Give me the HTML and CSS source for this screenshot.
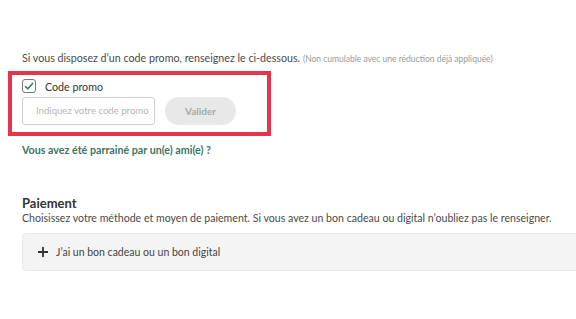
FILE: index.html
```html
<!DOCTYPE html>
<html lang="fr">
<head>
<meta charset="utf-8">
<link rel="stylesheet" href="styles.css">
</head>
<body>
<main class="page">
  <p class="intro">Si vous disposez d’un code promo, renseignez le ci-dessous. <span class="note">(Non cumulable avec une réduction déjà appliquée)</span></p>
  <div class="promo">
    <label class="check-row">
      <span class="checkbox">
        <svg width="10" height="8" viewBox="0 0 10 8"><path d="M1 4.2 L3.8 6.8 L9 1" fill="none" stroke="#2e6b58" stroke-width="1.4"/></svg>
      </span>
      <span class="check-label">Code promo</span>
    </label>
    <div class="field-row">
      <div class="input">Indiquez votre code promo</div>
      <button class="btn">Valider</button>
    </div>
  </div>
  <a class="referral">Vous avez été parrainé par un(e) ami(e) ?</a>
  <h2 class="title">Paiement</h2>
  <p class="desc">Choisissez votre méthode et moyen de paiement. Si vous avez un bon cadeau ou digital n’oubliez pas le renseigner.</p>
  <div class="gift">
    <svg class="plus" width="10" height="10" viewBox="0 0 10 10"><path d="M5 0 V10 M0 5 H10" stroke="#333" stroke-width="1.8"/></svg>
    <span>J’ai un bon cadeau ou un bon digital</span>
  </div>
</main>
</body>
</html>
```
FILE: styles.css
```css
html, body { margin: 0; padding: 0; background: #fff; }
body { font-family: Lato, "Liberation Sans", sans-serif; color: #444; }
.page { padding: 51px 0 0 22px; }
.intro { margin: 0; font-size: 10.7px; line-height: 14px; color: #4a4a4a; white-space: nowrap; }
.note { font-size: 8.5px; color: #9a9a9a; }
.promo {
  width: 263px; box-sizing: border-box; margin: 5px 0 0 -14px;
  border: 4px solid #e8334d; padding: 4px 10px 7px;
}
.check-row { display: flex; align-items: center; gap: 9px; height: 14px; }
.checkbox {
  width: 14px; height: 14px; box-sizing: border-box; border: 1px solid #777; border-radius: 3px;
  display: flex; align-items: center; justify-content: center;
}
.check-label { font-size: 10.7px; color: #333; }
.field-row { display: flex; align-items: center; gap: 10px; margin-top: 4px; }
.input {
  width: 133px; height: 28px; box-sizing: border-box; border: 1px solid #d0d0d0; border-radius: 3px;
  font-size: 9.6px; color: #b5b5b5; line-height: 26px; padding-left: 13px; overflow: hidden; white-space: nowrap;
}
.btn {
  width: 71px; height: 28px; border: 0; border-radius: 14px; background: #e8e8e8;
  font-family: inherit; font-size: 10px; font-weight: 700; color: #a8a8a8; padding: 0;
}
.referral { display: block; margin-top: 7px; font-size: 10.7px; font-weight: 700; color: #3a7563; line-height: 14px; }
.title { margin: 38px 0 0; font-size: 13px; line-height: 16px; font-weight: 700; color: #333; }
.desc { margin: 0; font-size: 10.6px; line-height: 14px; color: #4a4a4a; white-space: nowrap; }
.gift {
  margin-top: 8px; height: 38px; box-sizing: border-box; background: #f4f4f4;
  border: 1px solid #eaeaea; border-right: 0; border-radius: 4px 0 0 4px;
  display: flex; align-items: center; gap: 8px; padding-left: 15px;
  font-size: 10.5px; color: #444;
}
.plus { flex: none; }
```
